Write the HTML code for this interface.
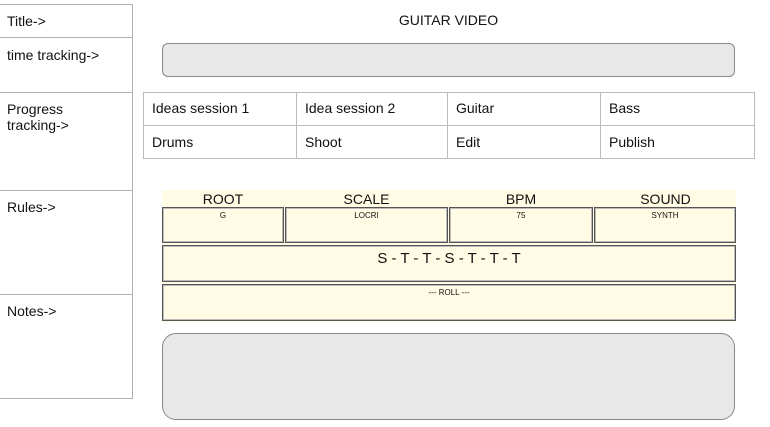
<!DOCTYPE html>
<html><head><style>
*{margin:0;padding:0;box-sizing:border-box}
body{width:770px;height:427px;background:#fff;font-family:"Liberation Sans",Arial,sans-serif;color:#111;position:relative;overflow:hidden}
.a{position:absolute}
.hl{position:absolute;left:0;width:133px;height:1px;background:#b0b0b0}
.lbl{position:absolute;left:7px;font-size:14px;line-height:16px}
.td{position:absolute;font-size:14px}
.box{position:absolute;border:1px solid #555;box-shadow:inset 0 0 0 1px #bbb;background:#fffbe4}
.hd{position:absolute;top:191px;font-size:14px;text-align:center;line-height:16px}
.sm{font-size:8px;text-align:center;padding-top:3px}
</style></head><body>
<div class="a" style="left:132px;top:4px;width:1px;height:395px;background:#b0b0b0"></div>
<div class="hl" style="top:4px"></div>
<div class="hl" style="top:37px"></div>
<div class="hl" style="top:92px"></div>
<div class="hl" style="top:190px"></div>
<div class="hl" style="top:294px"></div>
<div class="hl" style="top:398px"></div>
<div class="lbl" style="top:13px">Title-&gt;</div>
<div class="lbl" style="top:47px">time tracking-&gt;</div>
<div class="lbl" style="top:101px">Progress<br>tracking-&gt;</div>
<div class="lbl" style="top:199px">Rules-&gt;</div>
<div class="lbl" style="top:303px">Notes-&gt;</div>

<div class="a" style="left:162px;width:573px;top:12px;text-align:center;font-size:14px">GUITAR VIDEO</div>
<div class="a" style="left:162px;top:43px;width:573px;height:34px;background:#e8e8e8;border:1px solid #888;border-radius:6px"></div>

<div class="a" style="left:143px;top:92px;width:612px;height:67px;border:1px solid #bbb"></div>
<div class="a" style="left:143px;top:125px;width:612px;height:1px;background:#bbb"></div>
<div class="a" style="left:296px;top:92px;width:1px;height:67px;background:#bbb"></div>
<div class="a" style="left:447px;top:92px;width:1px;height:67px;background:#bbb"></div>
<div class="a" style="left:600px;top:92px;width:1px;height:67px;background:#bbb"></div>
<div class="td" style="left:152px;top:100px">Ideas session 1</div>
<div class="td" style="left:305px;top:100px">Idea session 2</div>
<div class="td" style="left:456px;top:100px">Guitar</div>
<div class="td" style="left:609px;top:100px">Bass</div>
<div class="td" style="left:152px;top:134px">Drums</div>
<div class="td" style="left:305px;top:134px">Shoot</div>
<div class="td" style="left:456px;top:134px">Edit</div>
<div class="td" style="left:609px;top:134px">Publish</div>

<div class="a" style="left:162px;top:190px;width:574px;height:132px;background:#fffbe4"></div>
<div class="hd" style="left:162px;width:122px">ROOT</div>
<div class="hd" style="left:285px;width:163px">SCALE</div>
<div class="hd" style="left:449px;width:144px">BPM</div>
<div class="hd" style="left:594px;width:143px">SOUND</div>
<div class="box sm" style="left:162px;top:207px;width:122px;height:36px">G</div>
<div class="box sm" style="left:285px;top:207px;width:163px;height:36px">LOCRI</div>
<div class="box sm" style="left:449px;top:207px;width:144px;height:36px">75</div>
<div class="box sm" style="left:594px;top:207px;width:142px;height:36px">SYNTH</div>
<div class="box" style="left:162px;top:245px;width:574px;height:37px;text-align:center;font-size:15px;padding-top:4px">S - T - T - S - T - T - T</div>
<div class="box sm" style="left:162px;top:284px;width:574px;height:37px">--- ROLL ---</div>

<div class="a" style="left:162px;top:333px;width:573px;height:87px;background:#e8e8e8;border:1px solid #888;border-radius:14px"></div>
</body></html>
